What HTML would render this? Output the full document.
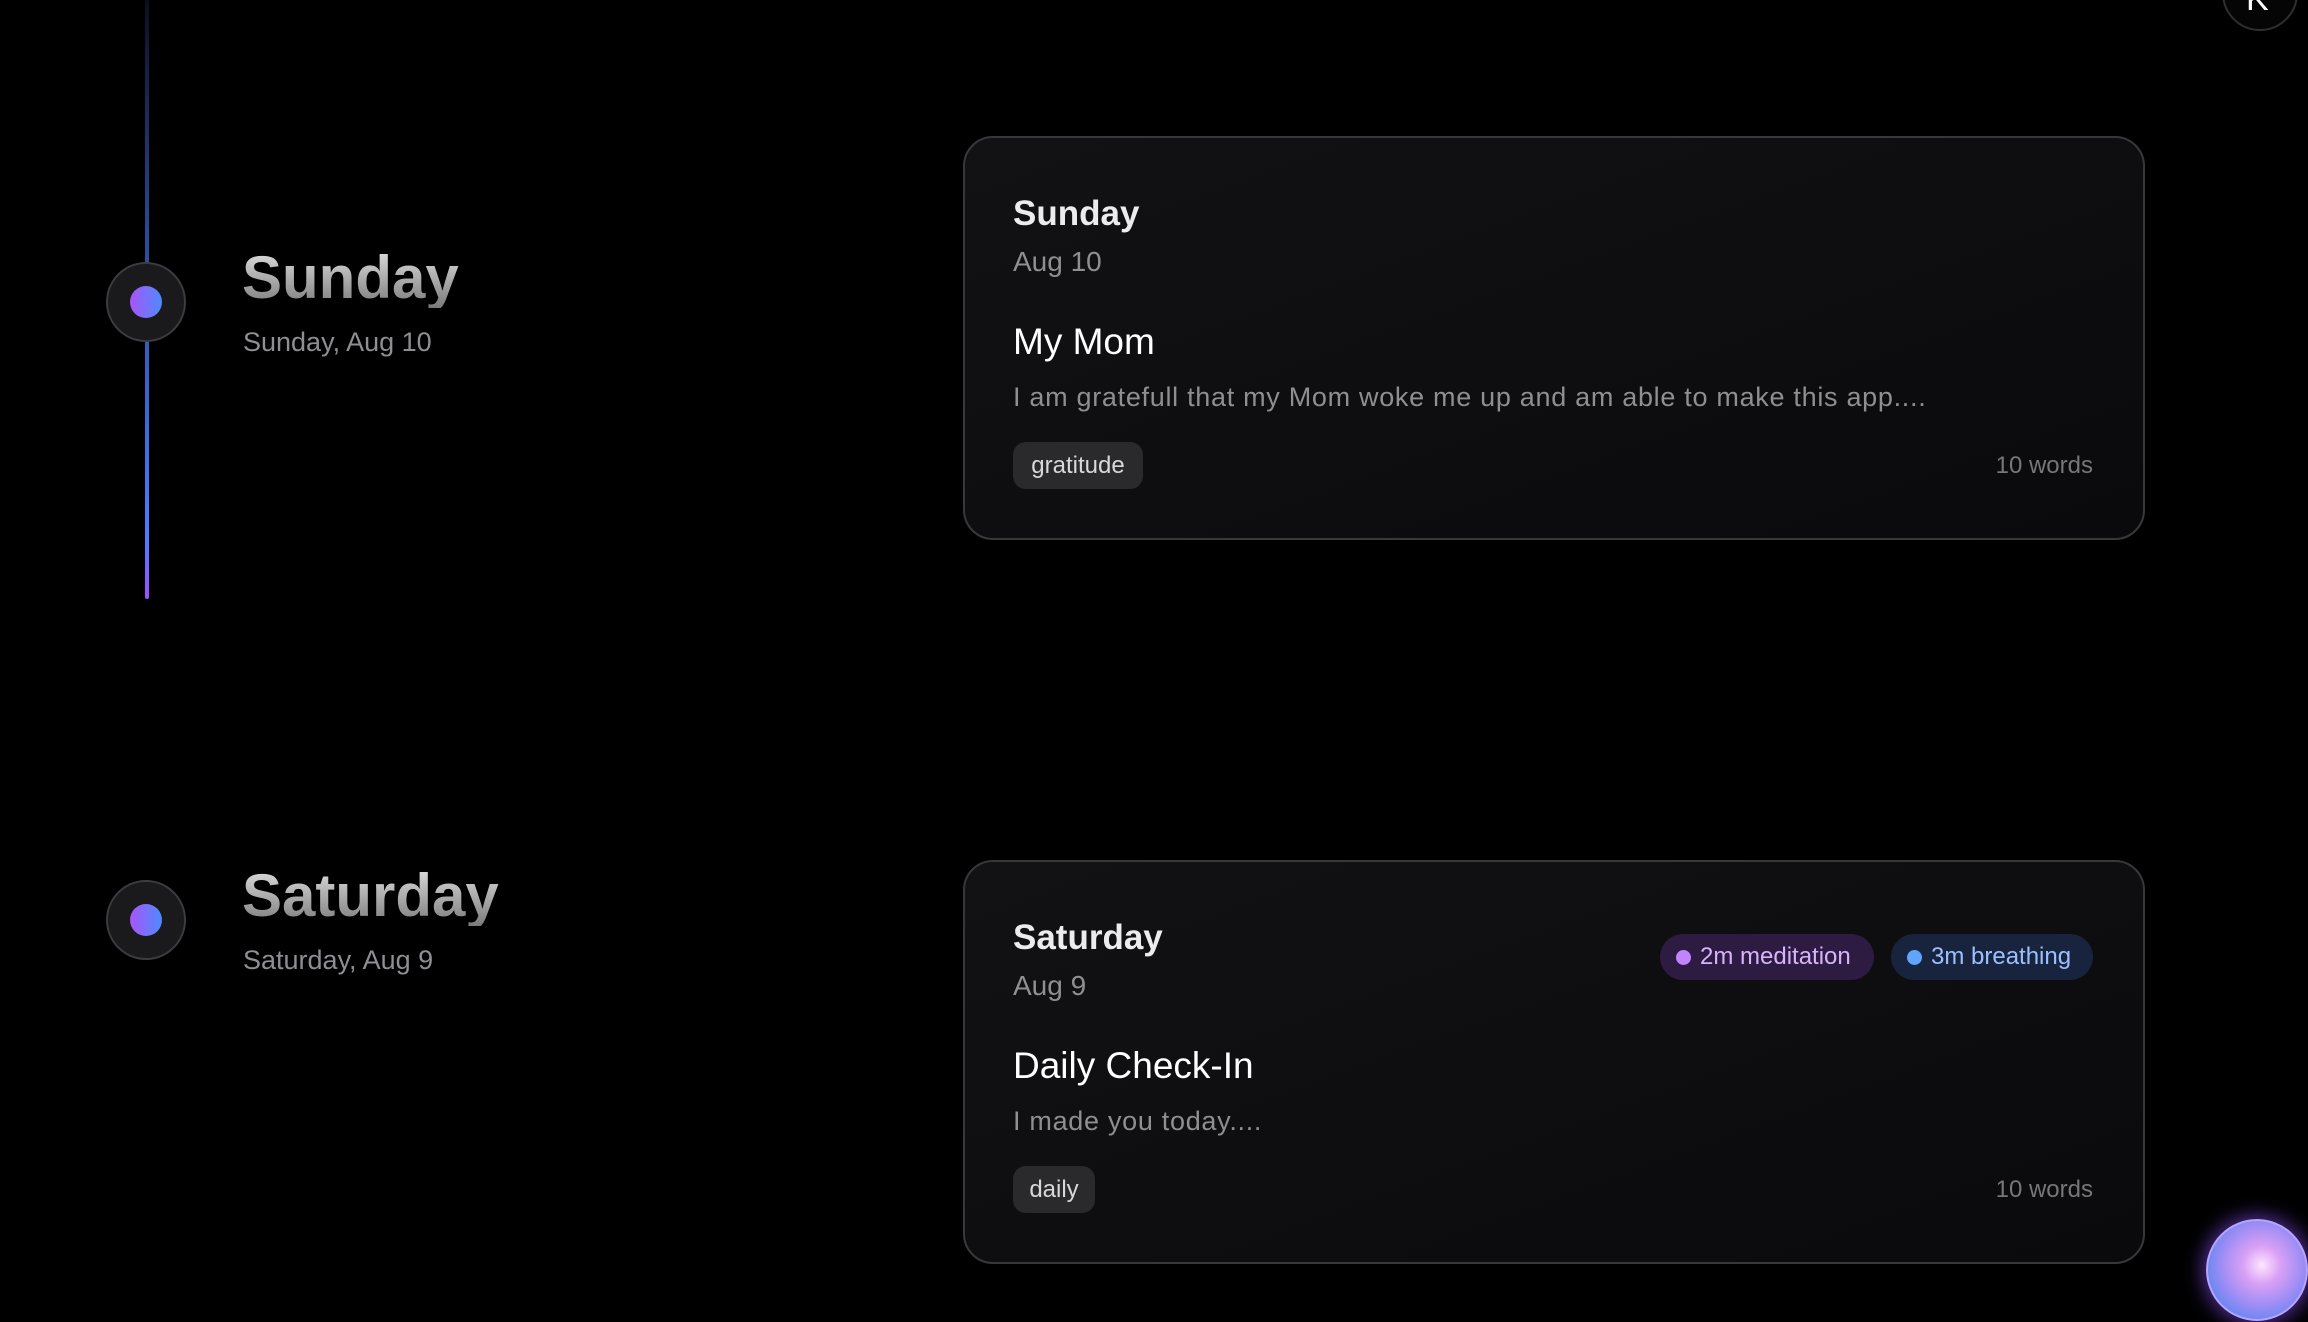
<!DOCTYPE html>
<html><head><meta charset="utf-8"><style>
html,body{margin:0;padding:0;background:#000;width:2308px;height:1322px;overflow:hidden;font-family:"Liberation Sans",sans-serif;}
.a{position:absolute;white-space:nowrap;}
.line{position:absolute;left:145px;top:0;width:4px;height:599px;border-radius:2px;background:linear-gradient(#0a0f1e 0%,#2a4a9a 40%,#3d6fe0 75%,#4d7cff 90%,#a24dff 100%);}
.node{position:absolute;width:76px;height:76px;border-radius:50%;background:#1a1a1d;border:2px solid #3c3c40;}
.node i{position:absolute;left:22px;top:22px;width:32px;height:32px;border-radius:50%;background:linear-gradient(90deg,#a855f7,#4d8bff);}
.h{font-weight:bold;font-size:60px;line-height:60px;background:linear-gradient(#e0e0e0,#7a7a7a);-webkit-background-clip:text;background-clip:text;color:transparent;}
.sub{font-size:27px;line-height:27px;color:#8e8e93;}
.card{position:absolute;left:963px;width:1178px;height:400px;border:2px solid #38383b;border-radius:30px;background:linear-gradient(160deg,#121214,#0a0a0c);}
.t1{font-size:35px;line-height:35px;font-weight:bold;color:#ececee;}
.t2{font-size:28px;line-height:28px;color:#8e8e93;}
.t3{font-size:37px;line-height:37px;color:#fff;}
.t4{font-size:27px;line-height:27px;color:#8e8e93;letter-spacing:0.7px;}
.tag{position:absolute;height:47px;border-radius:13px;background:#2a2a2d;color:#d8d8dc;font-size:24px;line-height:47px;text-align:center;}
.wc{font-size:24px;line-height:24px;color:#76767b;}
.pill{position:absolute;height:46px;border-radius:23px;font-size:24px;line-height:46px;}
.pill b{display:inline-block;width:15px;height:15px;border-radius:50%;margin:0 9px 0 16px;vertical-align:-1px;}
</style></head><body>
<div class="line"></div>
<div class="node" style="left:106px;top:262px"><i></i></div>
<div class="node" style="left:106px;top:880px"><i></i></div>
<div class="a h" style="left:242px;top:248px">Sunday</div>
<div class="a sub" style="left:243px;top:329px">Sunday, Aug 10</div>
<div class="a h" style="left:242px;top:866px">Saturday</div>
<div class="a sub" style="left:243px;top:947px">Saturday, Aug 9</div>

<div class="card" style="top:136px"></div>
<div class="a t1" style="left:1013px;top:196px">Sunday</div>
<div class="a t2" style="left:1013px;top:248px">Aug 10</div>
<div class="a t3" style="left:1013px;top:323px">My Mom</div>
<div class="a t4" style="left:1013px;top:384px">I am gratefull that my Mom woke me up and am able to make this app....</div>
<div class="tag" style="left:1013px;top:442px;width:130px">gratitude</div>
<div class="a wc" style="right:215px;top:454px">10 words</div>

<div class="card" style="top:860px"></div>
<div class="a t1" style="left:1013px;top:920px">Saturday</div>
<div class="a t2" style="left:1013px;top:972px">Aug 9</div>
<div class="a t3" style="left:1013px;top:1047px">Daily Check-In</div>
<div class="a t4" style="left:1013px;top:1108px">I made you today....</div>
<div class="tag" style="left:1013px;top:1166px;width:82px">daily</div>
<div class="a wc" style="right:215px;top:1178px">10 words</div>
<div class="pill" style="left:1660px;top:934px;width:214px;background:#2e1b42;color:#d6b4fb"><b style="background:#c084fc"></b>2m meditation</div>
<div class="pill" style="left:1891px;top:934px;width:202px;background:#18233e;color:#9cc0ff"><b style="background:#60a5fa"></b>3m breathing</div>

<div style="position:absolute;left:2222px;top:-45px;width:72px;height:72px;border-radius:50%;border:2px solid #2e2e30;background:#050505;"></div>
<div class="a" style="left:2246px;top:-18px;font-size:34px;line-height:34px;color:#fff;">K</div>

<div style="position:absolute;left:2206px;top:1219px;width:98px;height:98px;border-radius:50%;background:radial-gradient(circle at 55% 45%,#ffe6ff 0%,#d9a0f5 25%,#9a8cf5 55%,#5a86f0 80%,#8a6df0 100%);box-shadow:0 0 18px 4px rgba(140,80,255,0.55);border:2px solid #b8a4ff;"></div>
</body></html>
